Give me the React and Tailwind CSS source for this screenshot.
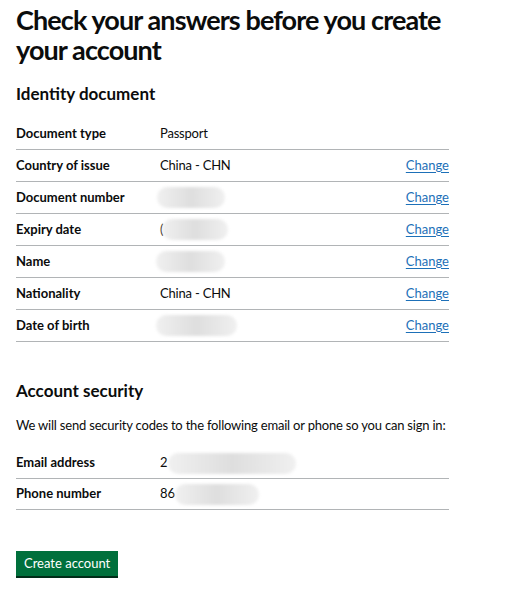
import React from "react";

const font = { fontFamily: "Lato, 'Liberation Sans', Arial, sans-serif" };

function Blur({ w, className = "" }) {
  return (
    <span
      className={`inline-block h-[21px] rounded-[11px] bg-gradient-to-r from-[#f0f0f0] via-[#dedede] to-[#f0f0f0] blur-[1.5px] align-middle ${className}`}
      style={{ width: w }}
    />
  );
}

function Row({ label, children, change = true }) {
  return (
    <div className="flex h-[32px] items-center border-b border-[#b1b4b6] text-[13px]">
      <div className="w-[144px] font-bold text-[#0b0c0c]">{label}</div>
      <div className="flex flex-1 items-center tracking-[-0.2px] text-[#0b0c0c]">{children}</div>
      {change && (
        <a href="#" className="text-[#1d70b8] underline underline-offset-2">
          Change
        </a>
      )}
    </div>
  );
}

export default function App() {
  return (
    <div className="min-h-screen bg-white px-4 pt-[5px]" style={font}>
      <div className="w-[433px]">
        <h1 className="whitespace-nowrap text-[27px] font-bold leading-[30px] tracking-[-0.9px] text-[#0b0c0c]">
          Check your answers before you create
          <br />
          your account
        </h1>

        <h2 className="mt-[18px] text-[17px] font-bold leading-[22px] text-[#0b0c0c]">
          Identity document
        </h2>

        <div className="mt-[13px]">
          <Row label="Document type" change={false}>
            Passport
          </Row>
          <Row label="Country of issue">China - CHN</Row>
          <Row label="Document number">
            <Blur w={68} className="-ml-[3px]" />
          </Row>
          <Row label="Expiry date">
            <span>(</span>
            <Blur w={66} className="-ml-[1px]" />
          </Row>
          <Row label="Name">
            <Blur w={69} className="-ml-[4px]" />
          </Row>
          <Row label="Nationality">China - CHN</Row>
          <Row label="Date of birth">
            <Blur w={81} className="-ml-[4px]" />
          </Row>
        </div>

        <h2 className="mt-[38px] text-[17px] font-bold leading-[22px] text-[#0b0c0c]">
          Account security
        </h2>
        <p className="mt-[13px] whitespace-nowrap text-[13px] leading-[20px] tracking-[-0.2px] text-[#0b0c0c]">
          We will send security codes to the following email or phone so you can sign in:
        </p>

        <div className="mt-[13px]">
          <div className="flex h-[31px] items-center border-b border-[#b1b4b6] text-[13px]">
            <div className="w-[144px] font-bold text-[#0b0c0c]">Email address</div>
            <div className="flex items-center text-[#0b0c0c]">
              <span>2</span>
              <Blur w={128} />
            </div>
          </div>
          <div className="flex h-[31px] items-center border-b border-[#b1b4b6] text-[13px]">
            <div className="w-[144px] font-bold text-[#0b0c0c]">Phone number</div>
            <div className="flex items-center text-[#0b0c0c]">
              <span>86</span>
              <Blur w={84} />
            </div>
          </div>
        </div>

        <button
          type="button"
          className="mt-[41px] h-[25px] bg-[#00703c] px-[8px] text-[13px] text-white shadow-[0_2px_0_#002d18]"
        >
          Create account
        </button>
      </div>
    </div>
  );
}
